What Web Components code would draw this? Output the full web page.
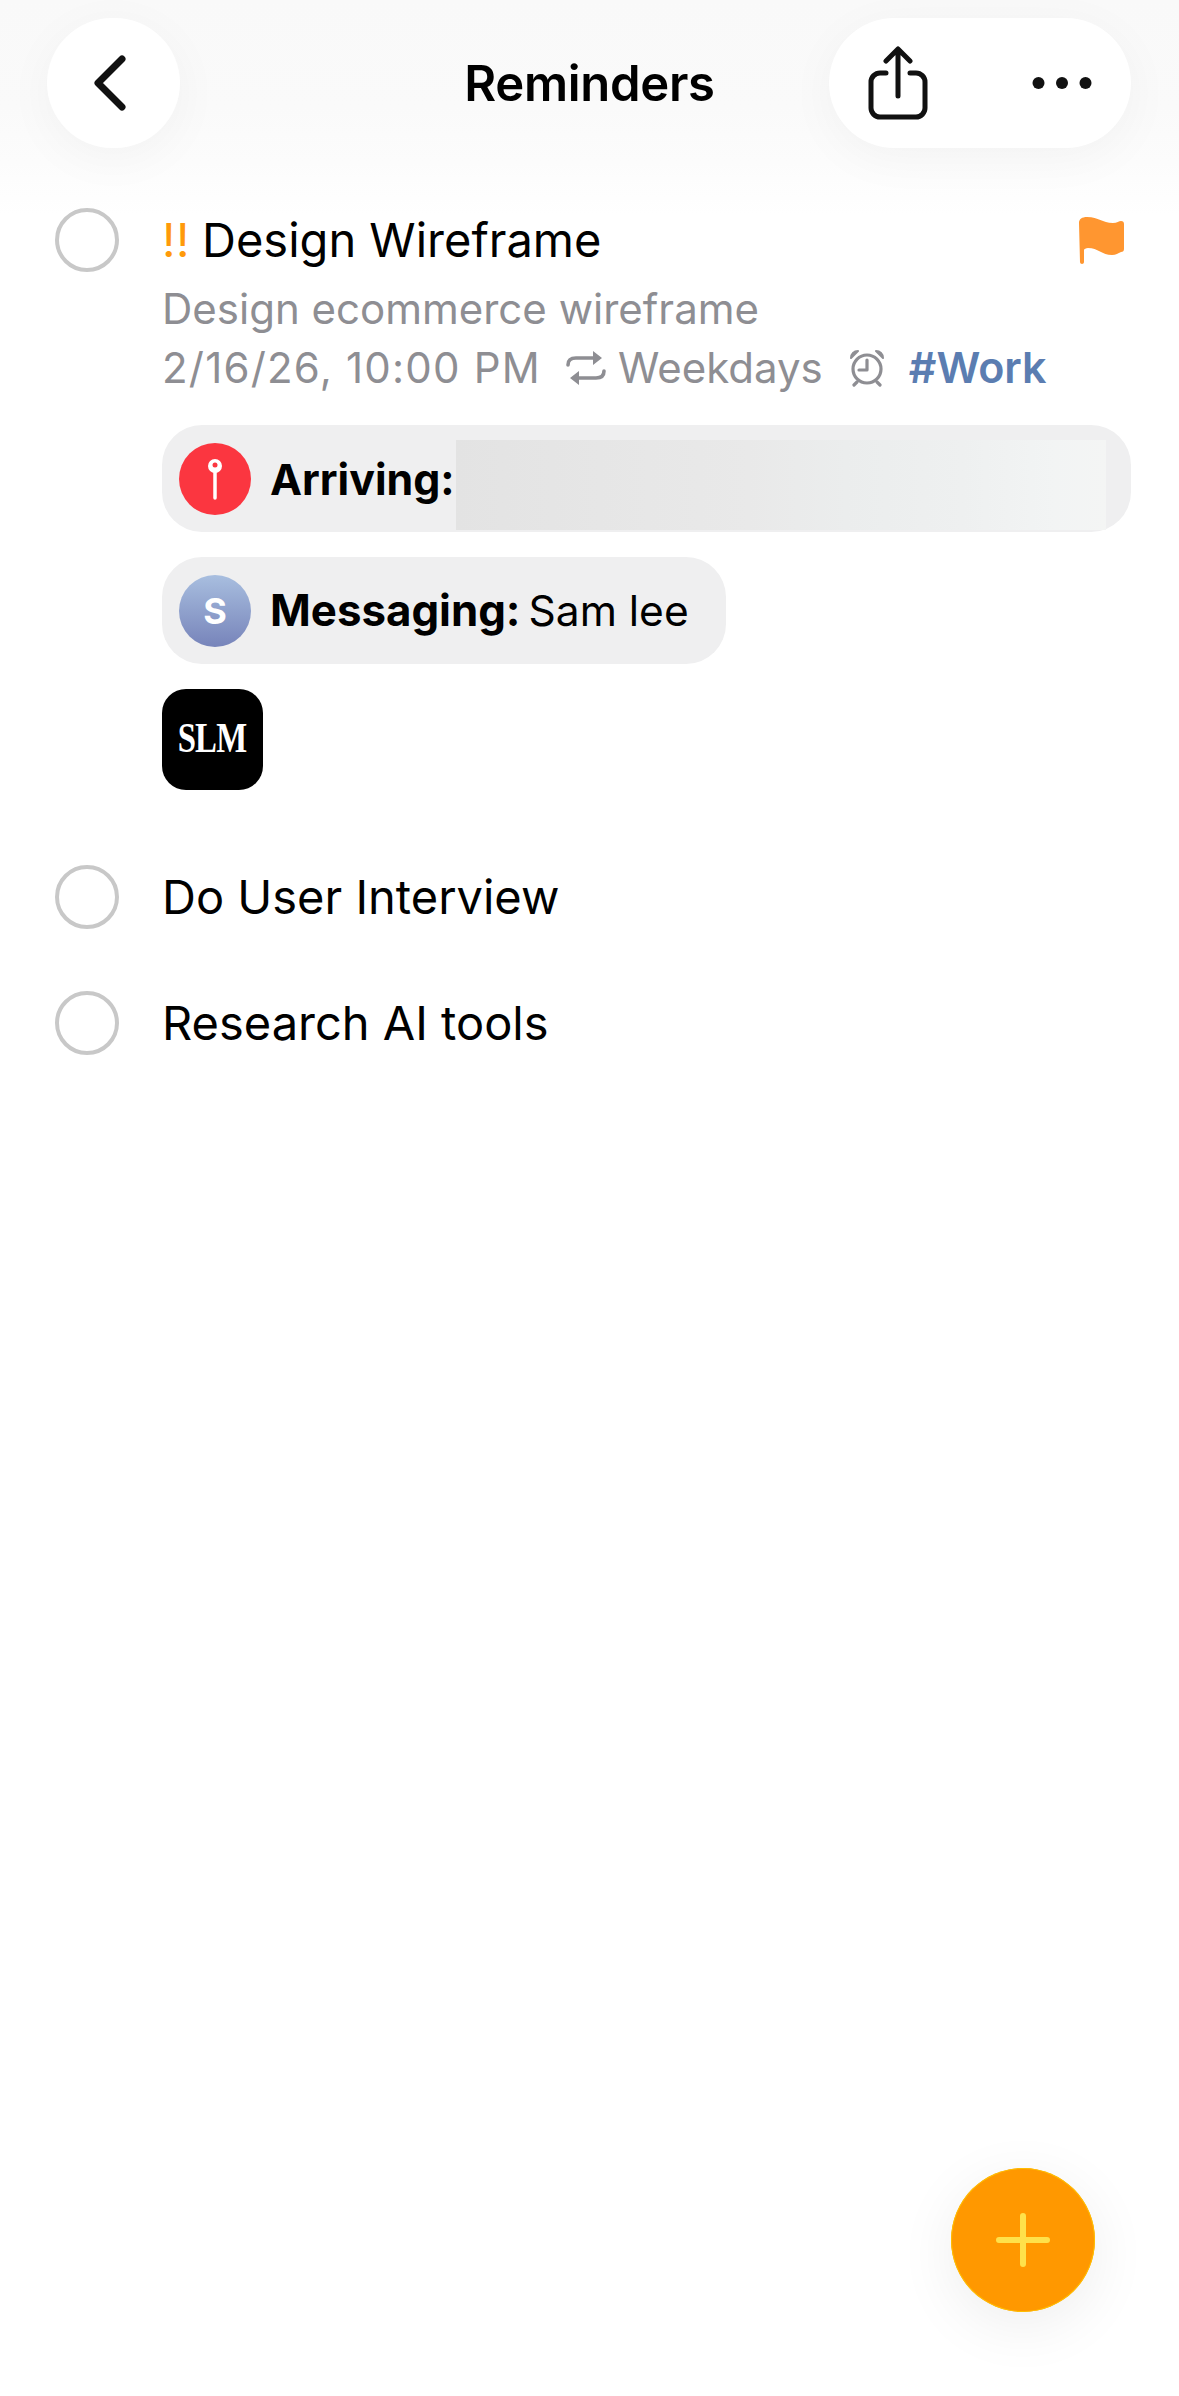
<!doctype html>
<html lang="en">
<head>
<meta charset="utf-8">
<title>Reminders</title>
<style>
html,body{margin:0;padding:0;background:#fff;height:2396px;overflow:hidden}
body{font-family:Inter,"Liberation Sans",sans-serif;color:#000;position:relative}
</style>
</head>
<body>
<rm-app>
  <rm-header title="Reminders"></rm-header>
  <rm-list>
    <rm-task first>
      <span slot="title"><span style="color:#ff9a0a;margin-right:12px;font-size:47px;letter-spacing:.5px">!!</span>Design Wireframe</span>
      <svg slot="flag" width="46" height="48" viewBox="0 0 46 48"><path d="M0 6C0 2 3 0 8 0c12 0 15 6 26 6 4 0 6-2 8-2 2 0 3 1 3 3v25c0 2-1 3-3 3-3 1-5 3-9 3-10 0-14-7-24-7-2 0-4 1-4 2v12c0 1-1 2-2 2s-2-1-2-2z" fill="#ff9630"/></svg>
      <rm-meta>
        <div>Design ecommerce wireframe</div>
        <rm-meta-line></rm-meta-line>
      </rm-meta>
      <rm-chip kind="location" label="Arriving:" blurred></rm-chip>
      <rm-chip kind="contact" label="Messaging:" value="Sam lee"></rm-chip>
      <rm-thumb></rm-thumb>
    </rm-task>
    <rm-task><span slot="title">Do User Interview</span></rm-task>
    <rm-task><span slot="title">Research AI tools</span></rm-task>
  </rm-list>
  <rm-fab></rm-fab>
</rm-app>
<script>
const def=(name,html,extra)=>{
  customElements.define(name,class extends HTMLElement{
    constructor(){super();this.attachShadow({mode:'open'}).innerHTML=typeof html==='function'?html(this):html;}
    connectedCallback(){ if(extra) extra(this); }
  });
};
def('rm-app',`<style>:host{display:block;height:2396px;position:relative;overflow:hidden;font-family:Inter,"Liberation Sans",sans-serif;background:#fff}</style><slot></slot>`);

def('rm-header',`<style>
:host{display:flex;align-items:center;justify-content:space-between;height:130px;padding:18px 48px 0 47px;position:relative}
:host::before{content:"";position:absolute;left:0;right:0;top:0;height:215px;background:linear-gradient(#f9f9f9 0,#fafafa 50%,#fcfcfc 75%,#fff 100%);z-index:0}
.btn{background:#fff;height:130px;border-radius:65px;display:flex;align-items:center;justify-content:center;box-shadow:0 10px 50px rgba(0,0,0,.04);position:relative;z-index:1}
.back{width:133px}
.pill{width:302px;justify-content:flex-start}
h1{position:absolute;left:0;right:0;top:58px;margin:0;text-align:center;font-size:49px;line-height:52px;font-weight:600;letter-spacing:-.3px;z-index:1}
.share{margin-left:39px}
.dots{margin-left:104px}
.chev{margin-left:-10px}
svg{display:block}
</style>
<div class="btn back"><svg class="chev" width="44" height="60" viewBox="0 0 44 60"><path d="M35 6 11 30l24 24" fill="none" stroke="#111" stroke-width="7" stroke-linecap="round" stroke-linejoin="round"/></svg></div>
<h1>Reminders</h1>
<div class="btn pill">
  <svg class="share" width="60" height="74" viewBox="0 0 60 74"><g fill="none" stroke="#111" stroke-width="5" stroke-linecap="round" stroke-linejoin="round"><path d="M18 27h-6a9 9 0 0 0-9 9v26a9 9 0 0 0 9 9h36a9 9 0 0 0 9-9V36a9 9 0 0 0-9-9h-6"/><path d="M30 50V4M18 15 30 3l12 12"/></g></svg>
  <svg class="dots" width="60" height="14" viewBox="0 0 60 14"><g fill="#111"><circle cx="6.500" cy="7" r="6"/><circle cx="30" cy="7" r="6"/><circle cx="53.500" cy="7" r="6"/></g></svg>
</div>`);

def('rm-list',`<style>:host{display:block;padding:60px 48px 0 55px;position:relative}</style><slot></slot>`);

def('rm-task',`<style>
:host{display:grid;grid-template-columns:64px 1fr;column-gap:43px;position:relative;margin-bottom:62px;font-size:47px;line-height:64px}
:host([first]){margin-bottom:75px}
.check{width:64px;height:64px;box-sizing:border-box;border:4.500px solid #c8c8c8;border-radius:50%}
.head{display:flex;justify-content:space-between;align-items:center;height:64px;white-space:nowrap}
.flag{display:block;margin-right:6px;margin-top:15px}
.body ::slotted(rm-chip){margin-top:25px}
</style>
<div class="check"></div>
<div class="body">
  <div class="head"><slot name="title"></slot><span class="flag"><slot name="flag"></slot></span></div>
  <slot></slot>
</div>`);

def('rm-meta',`<style>:host{display:block;color:#8e8e93;font-size:42px;line-height:59px;margin-top:7px;padding-bottom:3px}</style><slot></slot>`);

def('rm-meta-line',`<style>
:host{display:flex;align-items:center;white-space:nowrap}
.d{letter-spacing:1.2px;width:377px}
.a{margin-left:27px;margin-right:12px;display:block}
.b{margin-left:26px;margin-right:24px;display:block}
.tag{color:#5b7db1;font-weight:600;font-size:43px}
</style>
<span class="d">2/16/26, 10:00 PM</span>
<svg class="a" width="40" height="36" viewBox="0 0 40 36"><g fill="none" stroke="#8e8e93" stroke-width="3.600" stroke-linecap="round" stroke-linejoin="round"><path d="M2 15c0-5 3-7 8-7h20"/><path d="M38 21c0 5-3 7-8 7H10"/></g><path d="M27 1l9 7-9 7zM13 21l-9 7 9 7z" fill="#8e8e93"/></svg>
<span>Weekdays</span>
<svg class="b" width="36" height="38" viewBox="0 0 36 38"><g fill="none" stroke="#8e8e93" stroke-width="3.200" stroke-linecap="round" stroke-linejoin="round"><circle cx="18" cy="20" r="14"/><path d="M18 11v10h-8M8 33l-3 3M28 33l3 3"/></g><path d="M2 9c0-4 3-7 7-7zM34 9c0-4-3-7-7-7z" fill="#8e8e93" stroke="#8e8e93" stroke-width="2" stroke-linejoin="round"/></svg>
<span class="tag">#Work</span>`);

def('rm-chip',el=>{
  const loc=el.getAttribute('kind')==='location';
  const blurred=el.hasAttribute('blurred');
  return `<style>
:host{display:${blurred?'flex':'inline-flex'};vertical-align:top;align-items:center;height:107px;box-sizing:border-box;border-radius:40px;background:#efeff0;padding:0 ${blurred?'0':'37px'} 0 17px;font-size:42.500px;white-space:nowrap;color:#000}
.ic{width:72px;height:72px;border-radius:50%;flex:none;display:flex;align-items:center;justify-content:center;margin-right:19px}
.loc{background:#fb3640}
.con{background:linear-gradient(#a8bedf,#7784ba);color:#fff;font-weight:700;font-size:36px}
b{font-weight:700;font-size:${loc?'42.900px':'43.800px'}}
.val{margin-left:8px}
.blur{align-self:flex-end;flex:1;height:90px;margin:0 25px 2px 1px;background:linear-gradient(90deg,#e3e3e3 0,#e6e6e6 22%,#e9e9e9 45%,#ebeded 60%,#eef0f0 78%,#f2f4f4 92%,#f4f5f4 100%)}
</style>
<span class="ic ${loc?'loc':'con'}">${loc?`<svg width="20" height="44" viewBox="0 0 20 44"><circle cx="10" cy="9" r="6" fill="#fff" stroke="#fff" stroke-width="2"/><circle cx="10" cy="8" r="2.500" fill="#fb3640"/><path d="M10 14v27" stroke="#fff" stroke-width="3.500" stroke-linecap="round"/></svg>`:'S'}</span>
<b>${el.getAttribute('label')}</b>${blurred?'<span class="blur"></span>':`<span class="val">${el.getAttribute('value')}</span>`}`;
});

def('rm-thumb',`<style>
:host{display:flex;width:101px;height:101px;margin-top:25px;border-radius:24px;background:#000;color:#fff;align-items:center;justify-content:center;font-family:"Liberation Serif",serif;font-size:42px;font-weight:700;line-height:1;overflow:hidden}
span{display:block;letter-spacing:-1px;margin-top:-3px;transform:scaleX(.78)}
</style><span>SLM</span>`);

def('rm-fab',`<style>
:host{position:absolute;left:951px;top:2168px;width:144px;height:144px;border-radius:50%;background:#ff9800;box-shadow:0 0 0 1px #ffbf00 inset,0 14px 60px rgba(0,0,0,.07);display:flex;align-items:center;justify-content:center}
svg{display:block}
</style><svg width="54" height="54" viewBox="0 0 54 54"><path d="M27 3v48M3 27h48" stroke="#ffe14a" stroke-width="6" stroke-linecap="round"/></svg>`);
</script>
</body>
</html>
